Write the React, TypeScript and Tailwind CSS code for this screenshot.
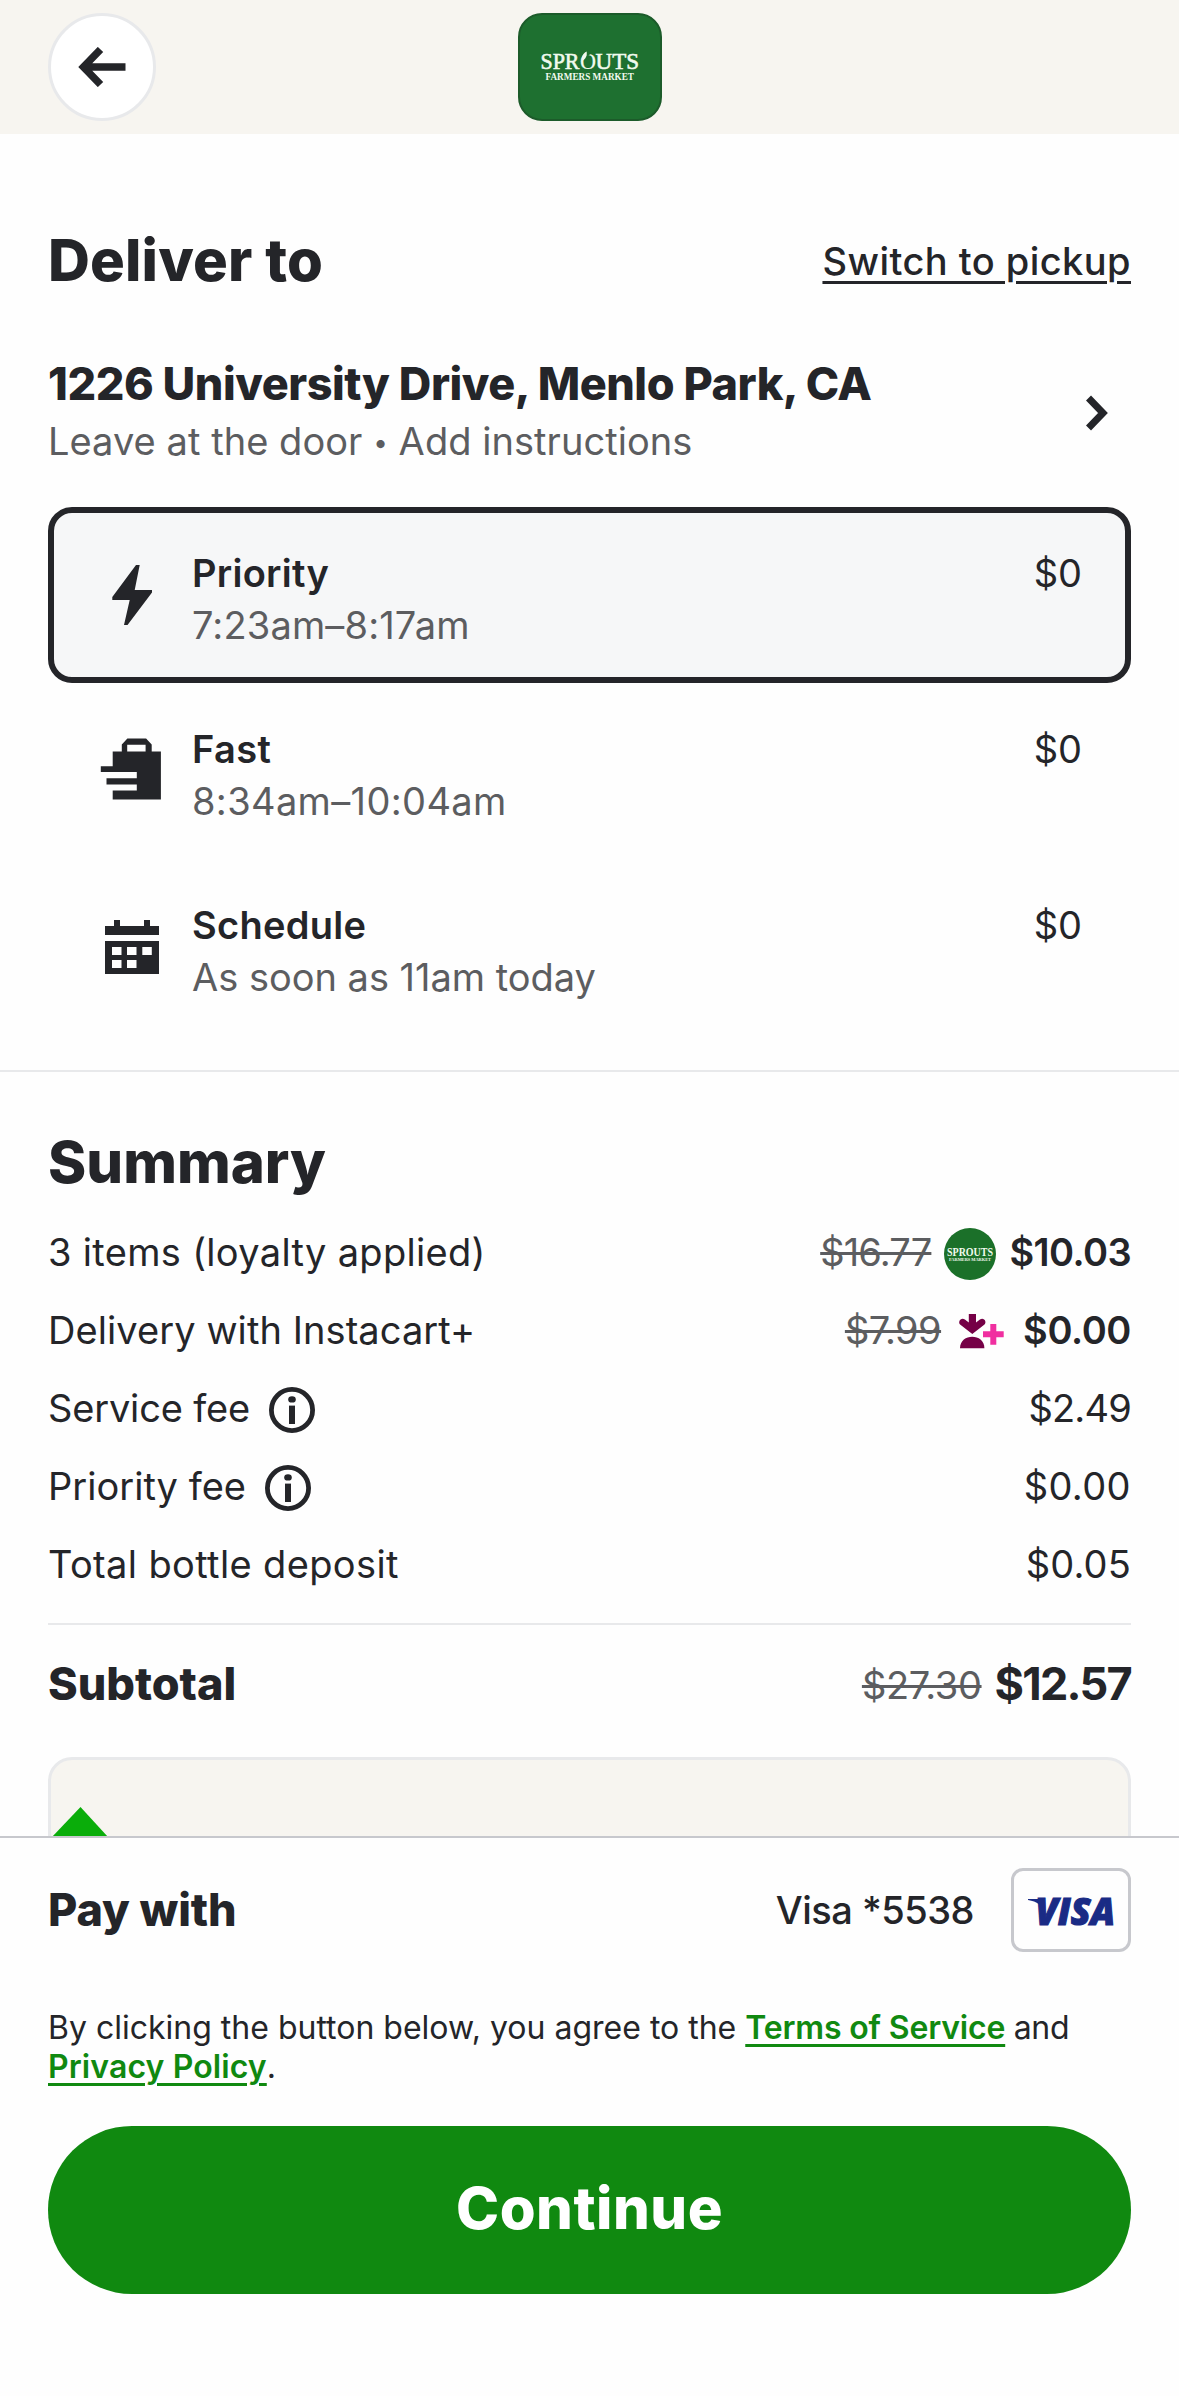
import type { ReactNode } from 'react'
import clsx from 'clsx'

/* ── Types ─────────────────────────────────── */

interface DeliveryOption {
  id: string
  name: string
  nameClass: string
  detail: string
  detailClass: string
  icon: ReactNode
}

interface SummaryRow {
  label: string
  labelClass: string
  price: ReactNode
  info?: boolean
}

/* ── Icons ─────────────────────────────────── */

function BackArrow() {
  return (
    <svg width="48" height="40" viewBox="0 0 48 40" fill="none" stroke="#242529" strokeWidth="7.5">
      <path d="M22.5 2.5 5.5 20l17 17.5M5 20h42.5" />
    </svg>
  )
}

function Chevron() {
  return (
    <svg width="22" height="36" viewBox="0 0 22 36" fill="none" stroke="#242529" strokeWidth="7">
      <path d="M2.5 3 17 18 2.5 33" />
    </svg>
  )
}

function BoltIcon() {
  return (
    <svg width="72" height="72" viewBox="0 0 72 72" fill="#242529">
      <path d="M40 6h3.7l-5 25H56v2.4L31.5 66H28l5.7-25H16.3v-3z" />
    </svg>
  )
}

function FastBagIcon() {
  return (
    <svg width="72" height="72" viewBox="0 0 72 72" fill="#242529" fillRule="evenodd">
      <path d="M16.7 16.4h9.1V9.6l5.6-6h18.7l5.6 6v6.8h9.2v48.2H16.7v-9h24.1v-6.2H10.5v-6.2h30.3V37h-36v-5.8h11.9zM31.2 9.8v6.6h18.4V9.8z" />
    </svg>
  )
}

function CalendarIcon() {
  return (
    <svg width="72" height="72" viewBox="0 0 72 72" fill="#242529" fillRule="evenodd">
      <path d="M9 15h9V9h6v6h24V9h6v6h9v9H9z" />
      <path d="M9 30h54v33H9zM16 36v8h9.5v-8zM31 36v8h9.5v-8zM46.3 36v8h9.5v-8zM16 49v8h9.5v-8zM31 49v8h9.5v-8z" />
    </svg>
  )
}

function InfoIcon() {
  return (
    <svg className="mt-1" width="46" height="46" viewBox="0 0 46 46">
      <circle cx="23" cy="23" r="20.6" fill="none" stroke="#242529" strokeWidth="4.8" />
      <ellipse cx="23" cy="12.4" rx="3.8" ry="3.2" fill="#242529" />
      <path d="M20 18.6h6V37h-6z" fill="#242529" />
    </svg>
  )
}

function PlusMemberIcon() {
  return (
    <svg className="mt-0.5 ml-[16px] mr-[18px]" width="48" height="36" viewBox="0 0 48 36">
      <g fill="#750046">
        <path d="M11.8 1H19v8.6l3.9-3.1c3.9-2.9 7.6 2.5 4.3 5.2L15.3 21 3.4 11.7C.2 9 4 3.6 7.9 6.5l3.9 3.1z" />
        <path d="M3 35.2c0-15.2 24.4-15.2 24.4 0z" />
      </g>
      <path d="M33.3 11h6v7.3h7.4v6h-7.4v7.4h-6v-7.4H26v-6h7.3z" fill="#f02fa0" />
    </svg>
  )
}

function StoreLogo() {
  return (
    <div className="h-[108px] w-[144px] overflow-hidden rounded-[24px] border-2 border-[#1c5b2a] bg-[#1e7030]">
      <svg width="140" height="104" viewBox="2 2 140 104" fill="#f1faee" fontFamily="Liberation Serif, serif">
        <g fontSize="23" stroke="#f1faee" strokeWidth="0.6">
          <text x="22.5" y="56.3" textLength="39" lengthAdjust="spacingAndGlyphs">SPR</text>
          <text x="62" y="56.3" textLength="16" lengthAdjust="spacingAndGlyphs" strokeWidth="0.2">O</text>
          <text x="77.5" y="56.3" textLength="43.5" lengthAdjust="spacingAndGlyphs">UTS</text>
        </g>
        <path d="M67.5 39.5h4.5l-.5 2.8-3 1z" fill="#1e7030" />
        <path d="M64 48c-.8-4 .8-7.6 4.6-9.6.8 4-.8 7.4-4.6 9.6z" />
        <text x="27.5" y="66.8" fontSize="9.5" fontWeight="700" textLength="88.5" lengthAdjust="spacingAndGlyphs">
          FARMERS MARKET
        </text>
      </svg>
    </div>
  )
}

function StoreBadge() {
  return (
    <svg className="mx-[13px] mt-[3px]" width="52" height="52" viewBox="0 0 52 52" fontFamily="Liberation Serif, serif">
      <circle cx="26" cy="26" r="26" fill="#1b7029" />
      <g fill="#f1faee" fontWeight="700">
        <text x="3" y="28.2" fontSize="11.5" textLength="46" lengthAdjust="spacingAndGlyphs">SPROUTS</text>
        <text x="5" y="32.6" fontSize="4.5" textLength="42" lengthAdjust="spacingAndGlyphs">FARMERS MARKET</text>
      </g>
    </svg>
  )
}

function VisaCard() {
  return (
    <div className="h-[84px] w-[120px] rounded-[12px] border-[3px] border-[#c7c8cd]">
      <svg width="114" height="78" viewBox="3 3 114 78" fill="#1a2b85">
        <path d="M17 31h12l5 13c-2.5-6.5-8-10.5-17-12z" />
        <text x="24.5" y="57.3" fontSize="36.5" fontWeight="800" fontStyle="italic" fontFamily="Open Sans, sans-serif"
          stroke="#1a2b85" strokeWidth="1.2" textLength="79.5" lengthAdjust="spacingAndGlyphs">
          VISA
        </text>
      </svg>
    </div>
  )
}

/* ── Data ──────────────────────────────────── */

const options: DeliveryOption[] = [
  {
    id: 'priority',
    name: 'Priority',
    nameClass: 'tracking-[0.25px]',
    detail: '7:23am–8:17am',
    detailClass: 'tracking-[0.15px]',
    icon: <BoltIcon />,
  },
  {
    id: 'fast',
    name: 'Fast',
    nameClass: 'tracking-[0.4px]',
    detail: '8:34am–10:04am',
    detailClass: 'tracking-[0.36px]',
    icon: <FastBagIcon />,
  },
  {
    id: 'schedule',
    name: 'Schedule',
    nameClass: 'tracking-[0.3px]',
    detail: 'As soon as 11am today',
    detailClass: 'tracking-[-0.02px]',
    icon: <CalendarIcon />,
  },
]

const rows: SummaryRow[] = [
  {
    label: '3 items (loyalty applied)',
    labelClass: 'tracking-[0.32px]',
    price: (
      <>
        <Struck className="tracking-[-0.85px]">$16.77</Struck>
        <StoreBadge />
        <span className="font-semibold tracking-[-0.58px]">$10.03</span>
      </>
    ),
  },
  {
    label: 'Delivery with Instacart+',
    labelClass: 'tracking-[0.08px]',
    price: (
      <>
        <Struck className="tracking-[-0.55px]">$7.99</Struck>
        <PlusMemberIcon />
        <span className="font-semibold tracking-[-0.4px]">$0.00</span>
      </>
    ),
  },
  {
    label: 'Service fee',
    labelClass: 'tracking-[-0.17px]',
    price: <span className="tracking-[-0.8px]">$2.49</span>,
    info: true,
  },
  {
    label: 'Priority fee',
    labelClass: 'tracking-[0.02px]',
    price: <span className="tracking-[0.41px]">$0.00</span>,
    info: true,
  },
  {
    label: 'Total bottle deposit',
    labelClass: 'tracking-[0.37px]',
    price: <span className="tracking-[0.16px]">$0.05</span>,
  },
]

/* ── Components ────────────────────────────── */

function Struck({ className, children }: { className?: string; children: ReactNode }) {
  return (
    <span className={clsx('text-[#5c5d60] line-through decoration-[3px]', className)}>{children}</span>
  )
}

function OptionCard({ option, selected }: { option: DeliveryOption; selected: boolean }) {
  return (
    <button
      className={clsx(
        'flex h-[176px] w-full items-start rounded-[24px] border-[6px] pt-[34px] pr-[43px] pl-[42px] text-left',
        selected ? 'border-[#242529] bg-[#f6f7f8]' : 'border-transparent',
      )}
    >
      <span className="mt-3">{option.icon}</span>
      <span className="ml-6 flex flex-1 flex-col">
        <span className={clsx('font-semibold', option.nameClass)}>{option.name}</span>
        <span className={clsx('text-[#5c5d60]', option.detailClass)}>{option.detail}</span>
      </span>
      <span>$0</span>
    </button>
  )
}

export default function App() {
  return (
    <div className="flex h-[2396px] w-[1179px] flex-col overflow-hidden bg-[#fefefe] font-['Inter',sans-serif] text-[38px] leading-[52px] text-[#242529]">
      <header className="grid h-[134px] shrink-0 grid-cols-3 items-center bg-[#f7f5f0] px-12">
        <button className="flex size-[108px] items-center justify-center rounded-full border-[3px] border-[#e8e9eb] bg-white">
          <BackArrow />
        </button>
        <div className="flex justify-center">
          <StoreLogo />
        </div>
      </header>

      <main className="min-h-0 flex-1 overflow-hidden">
        <section className="border-b-2 border-[#e8e9eb] px-12 pt-24 pb-[35px]">
          <div className="flex h-[60px] items-center justify-between">
            <h2 className="text-[58px] leading-[60px] font-extrabold tracking-[0.15px]">Deliver to</h2>
            <a className="pt-[2px] font-medium tracking-[0.45px] underline decoration-[3px] underline-offset-[6px]">
              Switch to pickup
            </a>
          </div>

          <div className="mt-[66px] flex items-center justify-between pr-[23px]">
            <div className="flex flex-col gap-px leading-[56px]">
              <p className="text-[45px] font-extrabold tracking-[-0.46px]">1226 University Drive, Menlo Park, CA</p>
              <p className="tracking-[0.05px] text-[#5c5d60]">
                Leave at the door <span className="align-[3px] text-[26px] leading-none">•</span> Add instructions
              </p>
            </div>
            <Chevron />
          </div>

          <div className="mt-[38px]">
            {options.map(option => (
              <OptionCard key={option.id} option={option} selected={option.id === 'priority'} />
            ))}
          </div>
        </section>

        <section className="px-12 pt-[60px]">
          <h2 className="text-[58px] leading-[60px] font-extrabold">Summary</h2>
          <div className="mt-[21px]">
            {rows.map(row => (
              <div key={row.label} className="flex h-[78px] items-center justify-between">
                <div className="flex items-center gap-[19px]">
                  <span className={row.labelClass}>{row.label}</span>
                  {row.info && <InfoIcon />}
                </div>
                <div className="flex items-center">{row.price}</div>
              </div>
            ))}
          </div>

          <div className="mt-5 flex h-[89px] items-center justify-between border-t-2 border-[#e8e9eb] pt-[30px] leading-[56px]">
            <span className="text-[45px] font-extrabold">Subtotal</span>
            <div className="flex items-center gap-[13px]">
              <Struck className="pt-[3px] tracking-[-0.34px]">$27.30</Struck>
              <span className="text-[45px] font-bold tracking-[-1.74px]">$12.57</span>
            </div>
          </div>

          {/* Promo card, cut off by the pay bar */}
          <div className="mt-[45px] h-[200px] rounded-[24px] border-[3px] border-[#e8e9eb] bg-[#f7f5f0] pt-[47px]">
            <svg className="ml-px" width="56" height="30" viewBox="0 0 56 30" fill="#0aad0a">
              <path d="M28.5 0 56 30H0z" />
            </svg>
          </div>
        </section>
      </main>

      <footer className="h-[560px] shrink-0 border-t-2 border-[#c7c8cd] px-12 pt-[30px]">
        <div className="flex h-[84px] items-center justify-between">
          <span className="text-[45px] font-extrabold tracking-[-0.1px]">Pay with</span>
          <div className="flex items-center gap-[37px]">
            <span className="font-medium tracking-[-0.5px]">Visa *5538</span>
            <VisaCard />
          </div>
        </div>

        <p className="mt-14 text-[32px] leading-[39px]">
          By clicking the button below, you agree to the{' '}
          <a className="font-semibold tracking-[-0.17px] text-[#108910] underline decoration-[3px] underline-offset-[5px]">
            Terms of Service
          </a>
          <span className="tracking-[-0.4px]"> and </span>
          <a className="font-semibold tracking-[0.1px] text-[#108910] underline decoration-[3px] underline-offset-[5px]">
            Privacy Policy
          </a>
          .
        </p>

        <button className="mt-10 flex h-[168px] w-full items-center justify-center rounded-full bg-[#108910] pb-[4px] text-[58px] font-extrabold tracking-[0.5px] text-white">
          Continue
        </button>
      </footer>
    </div>
  )
}
